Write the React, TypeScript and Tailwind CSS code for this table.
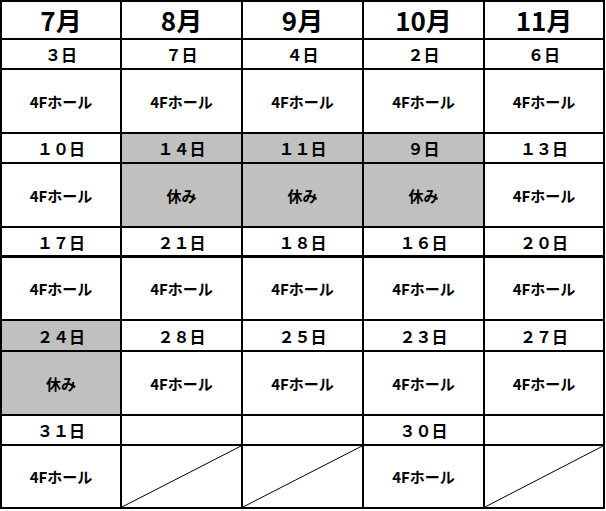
type Cell = { text?: string; gray?: boolean; slash?: boolean };

const MONTHS = ["7月", "8月", "9月", "10月", "11月"];
const COL_W = ["w-[120px]", "w-[121px]", "w-[121px]", "w-[121px]", "w-[120px]"];

const HALL = "4Fホール";
const OFF = "休み";

type Week = {
  days: Cell[];
  items: Cell[];
  dayH: string;
  itemH: string;
  thick?: boolean;
};

const WEEKS: Week[] = [
  {
    days: [{ text: "３日" }, { text: "７日" }, { text: "４日" }, { text: "２日" }, { text: "６日" }],
    items: [{ text: HALL }, { text: HALL }, { text: HALL }, { text: HALL }, { text: HALL }],
    dayH: "h-[30px]",
    itemH: "h-[64px]",
  },
  {
    days: [
      { text: "１０日" },
      { text: "１４日", gray: true },
      { text: "１１日", gray: true },
      { text: "９日", gray: true },
      { text: "１３日" },
    ],
    items: [
      { text: HALL },
      { text: OFF, gray: true },
      { text: OFF, gray: true },
      { text: OFF, gray: true },
      { text: HALL },
    ],
    dayH: "h-[30px]",
    itemH: "h-[64px]",
  },
  {
    days: [{ text: "１７日" }, { text: "２１日" }, { text: "１８日" }, { text: "１６日" }, { text: "２０日" }],
    items: [{ text: HALL }, { text: HALL }, { text: HALL }, { text: HALL }, { text: HALL }],
    dayH: "h-[30px]",
    itemH: "h-[63px]",
    thick: true,
  },
  {
    days: [
      { text: "２４日", gray: true },
      { text: "２８日" },
      { text: "２５日" },
      { text: "２３日" },
      { text: "２７日" },
    ],
    items: [{ text: OFF, gray: true }, { text: HALL }, { text: HALL }, { text: HALL }, { text: HALL }],
    dayH: "h-[31px]",
    itemH: "h-[64px]",
  },
  {
    days: [{ text: "３１日" }, {}, {}, { text: "３０日" }, {}],
    items: [{ text: HALL }, { slash: true }, { slash: true }, { text: HALL }, { slash: true }],
    dayH: "h-[30px]",
    itemH: "h-[63px]",
  },
];

function Slash() {
  return (
    <svg
      className="absolute inset-0 h-full w-full"
      viewBox="0 0 100 100"
      preserveAspectRatio="none"
      aria-hidden
    >
      <line x1="0" y1="100" x2="100" y2="0" stroke="black" strokeWidth={1} vectorEffect="non-scaling-stroke" />
    </svg>
  );
}

function Row({
  cells,
  height,
  textClass,
  thick = false,
}: {
  cells: Cell[];
  height: string;
  textClass: string;
  thick?: boolean;
}) {
  return (
    <div className="flex">
      {cells.map((c, i) => (
        <div
          key={i}
          className={`relative flex shrink-0 items-center justify-center border-r-2 border-black ${
            thick ? "border-b-[3px]" : "border-b-2"
          } ${COL_W[i]} ${height} ${c.gray ? "bg-[#c0c0c0]" : "bg-white"} ${textClass}`}
        >
          {c.slash ? <Slash /> : null}
          {c.text}
        </div>
      ))}
    </div>
  );
}

export default function App() {
  return (
    <div className="min-h-screen bg-white">
      <div
        className="w-[605px] border-l-2 border-t-2 border-black text-black"
        style={{ fontFamily: '"Noto Sans CJK JP", "Noto Sans", sans-serif' }}
      >
        <Row
          cells={MONTHS.map((m) => ({ text: m }))}
          height="h-[38px]"
          textClass="text-[26px] font-bold leading-none"
        />
        {WEEKS.map((w, i) => (
          <div key={i}>
            <Row
              cells={w.days}
              height={w.dayH}
              textClass="text-[16px] font-bold leading-none"
              thick={w.thick}
            />
            <Row cells={w.items} height={w.itemH} textClass="text-[15px] font-bold leading-none" />
          </div>
        ))}
      </div>
    </div>
  );
}
